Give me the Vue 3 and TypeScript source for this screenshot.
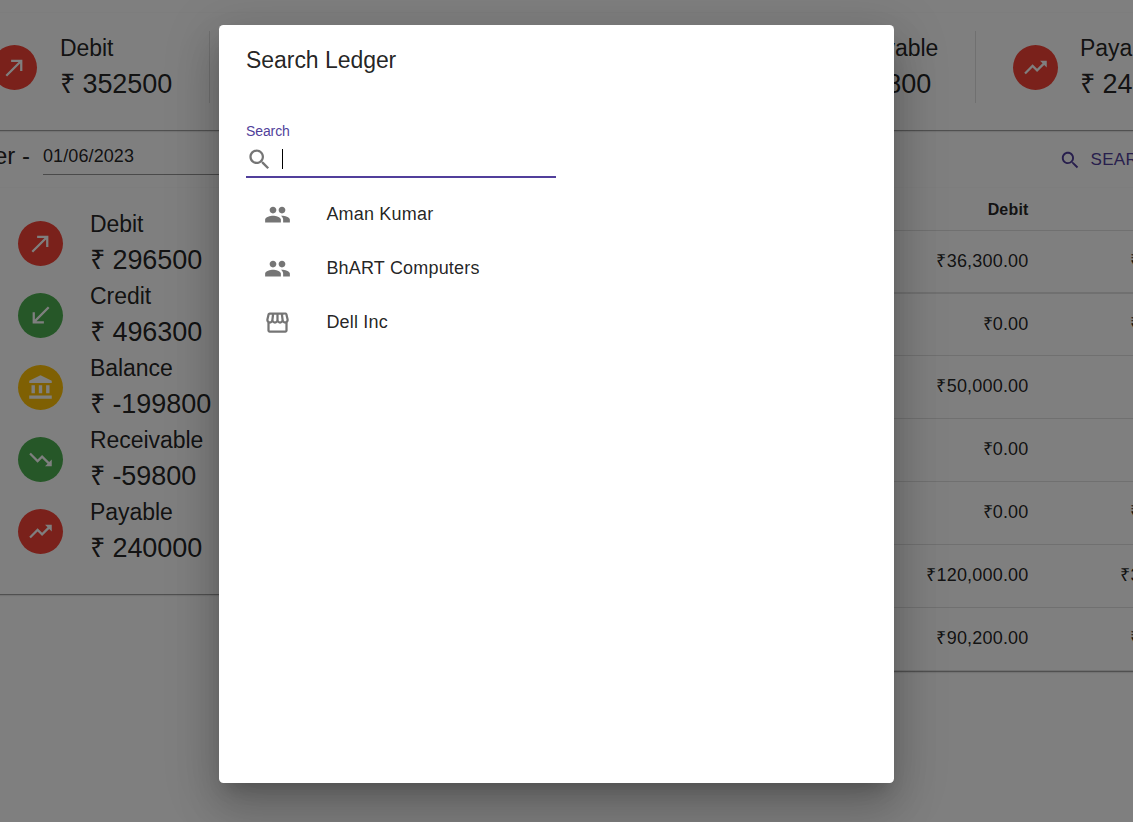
<script setup lang="ts">
interface Stat {
  label: string
  value: string
  tone: 'red' | 'green' | 'amber'
  icon: string
}

const icons = {
  out: 'M9 5v2h6.59L4 18.59 5.41 20 17 8.41V15h2V5z',
  in: 'M20 5.41 18.59 4 7 15.59V9H5v10h10v-2H8.41z',
  bank: 'M4 10h3v7H4zm6.5 0h3v7h-3zM2 19h20v3H2zm15-9h3v7h-3zm-5-9L2 6v2h20V6z',
  down: 'm16 18 2.29-2.29-4.88-4.88-4 4L2 7.41 3.41 6l6 6 4-4 6.3 6.29L22 12v6z',
  up: 'm16 6 2.29 2.29-4.88 4.88-4-4L2 16.59 3.41 18l6-6 4 4 6.3-6.29L22 12V6z',
  search:
    'M15.5 14h-.79l-.28-.27C15.41 12.59 16 11.11 16 9.5 16 5.91 13.09 3 9.5 3S3 5.91 3 9.5 5.91 16 9.5 16c1.61 0 3.09-.59 4.23-1.57l.27.28v.79l5 4.99L20.49 19l-4.99-5zm-6 0C7.01 14 5 11.99 5 9.5S7.01 5 9.5 5 14 7.01 14 9.5 11.99 14 9.5 14z',
  group:
    'M16 11c1.66 0 2.99-1.34 2.99-3S17.66 5 16 5s-3 1.34-3 3 1.34 3 3 3zm-8 0c1.66 0 2.99-1.34 2.99-3S9.66 5 8 5 5 6.34 5 8s1.34 3 3 3zm0 2c-2.33 0-7 1.17-7 3.5V19h14v-2.5c0-2.33-4.67-3.5-7-3.5zm8 0c-.29 0-.62.02-.97.05 1.16.84 1.97 1.97 1.97 3.45V19h6v-2.5c0-2.33-4.67-3.5-7-3.5z',
  store:
    'M21.9 8.89l-1.05-4.37c-.22-.9-1-1.52-1.91-1.52H5.05c-.9 0-1.69.63-1.9 1.52L2.1 8.89c-.24 1.02-.02 2.06.62 2.88.08.11.19.19.28.29V19c0 1.1.9 2 2 2h14c1.1 0 2-.9 2-2v-6.94c.09-.09.2-.18.28-.28.64-.82.87-1.87.62-2.89zm-2.99-3.9l1.05 4.37c.1.42.01.84-.25 1.17-.14.18-.44.47-.94.47-.61 0-1.14-.49-1.21-1.14L16.98 5l1.93-.01zM13 5h1.96l.54 4.52c.05.39-.07.78-.33 1.07-.22.26-.54.41-.95.41-.67 0-1.22-.59-1.22-1.31V5zM8.49 9.52L9.04 5H11v4.69c0 .72-.55 1.31-1.29 1.31-.34 0-.65-.15-.89-.41-.25-.29-.37-.68-.33-1.07zm-4.45-.16L5.05 5h1.97l-.58 4.86c-.08.65-.6 1.14-1.21 1.14-.49 0-.8-.29-.93-.47-.27-.32-.36-.75-.26-1.17zM5 19v-6.03c.08.01.15.03.23.03.87 0 1.66-.36 2.24-.95.6.6 1.4.95 2.31.95.87 0 1.65-.36 2.23-.93.59.57 1.39.93 2.29.93.84 0 1.64-.35 2.24-.95.58.59 1.37.95 2.24.95.08 0 .15-.02.23-.03V19H5z',
}

const overall: Stat[] = [
  { label: 'Debit', value: '352500', tone: 'red', icon: icons.out },
  { label: 'Credit', value: '496300', tone: 'green', icon: icons.in },
  { label: 'Balance', value: '-199800', tone: 'amber', icon: icons.bank },
  { label: 'Receivable', value: '-59800', tone: 'green', icon: icons.down },
  { label: 'Payable', value: '240000', tone: 'red', icon: icons.up },
]
const period: Stat[] = overall.map((s) => (s.label === 'Debit' ? { ...s, value: '296500' } : s))

const rows: [string, string][] = [
  ['₹36,300.00', '₹20,000.00'],
  ['₹0.00', '₹50,000.00'],
  ['₹50,000.00', '₹0.00'],
  ['₹0.00', '₹0.00'],
  ['₹0.00', '₹26,300.00'],
  ['₹120,000.00', '₹310,000.00'],
  ['₹90,200.00', '₹90,000.00'],
]

const results = [
  { name: 'Aman Kumar', icon: icons.group },
  { name: 'BhART Computers', icon: icons.group },
  { name: 'Dell Inc', icon: icons.store },
]
</script>

<template>
  <div class="screen">
    <div class="page">
      <section class="card summary">
        <div v-for="s in overall" :key="s.label" class="stat">
          <span class="avatar" :class="s.tone"><svg viewBox="0 0 24 24"><path :d="s.icon" /></svg></span>
          <div class="figures">
            <div class="label">{{ s.label }}</div>
            <div class="value">₹ {{ s.value }}</div>
          </div>
        </div>
      </section>

      <div class="toolbar">
        <div class="heading">Ledger -</div>
        <div class="date">01/06/2023</div>
        <div class="searchbtn">
          <svg viewBox="0 0 24 24"><path :d="icons.search" /></svg>
          <span>SEARCH</span>
        </div>
      </div>

      <div class="columns">
        <section class="card side">
          <div v-for="s in period" :key="s.label" class="entry">
            <span class="avatar" :class="s.tone"><svg viewBox="0 0 24 24"><path :d="s.icon" /></svg></span>
            <div class="figures">
              <div class="label">{{ s.label }}</div>
              <div class="value">₹ {{ s.value }}</div>
            </div>
          </div>
        </section>
        <section class="card table">
          <div class="row head"><span>Debit</span><span>Credit</span></div>
          <div v-for="(r, i) in rows" :key="i" class="row">
            <span>{{ r[0] }}</span><span>{{ r[1] }}</span>
          </div>
        </section>
      </div>
    </div>

    <div class="backdrop">
      <div class="dialog">
        <h2>Search Ledger</h2>
        <div class="caption">Search</div>
        <div class="field">
          <svg viewBox="0 0 24 24"><path :d="icons.search" /></svg>
          <i class="caret"></i>
        </div>
        <ul>
          <li v-for="r in results" :key="r.name">
            <svg viewBox="0 0 24 24"><path :d="r.icon" /></svg>
            <span>{{ r.name }}</span>
          </li>
        </ul>
      </div>
    </div>
  </div>
</template>

<style>
body {
  margin: 0;
  overflow: hidden;
}
</style>

<style scoped>
.screen {
  position: relative;
  width: 1133px;
  height: 822px;
  overflow: hidden;
  background: #fff;
  color: rgba(0, 0, 0, 0.87);
  font-family: 'Liberation Sans', Arial, sans-serif;
  font-size: 18px;
}
svg {
  display: block;
  width: 27px;
  height: 27px;
  fill: currentColor;
}
.page {
  box-sizing: border-box;
  width: 1353px;
  margin-left: -20px;
  padding-top: 13px;
}
.card {
  box-sizing: border-box;
  background: #fff;
  box-shadow: 0 2px 1px -1px rgba(0, 0, 0, 0.2), 0 1px 1px 0 rgba(0, 0, 0, 0.14), 0 1px 3px 0 rgba(0, 0, 0, 0.12);
}
.summary {
  display: grid;
  grid-template-columns: 210px 255px 256px 255px 300px;
  height: 117px;
  padding: 18px 0 0 20px;
}
.stat {
  display: flex;
  box-sizing: border-box;
  align-items: center;
  height: 72px;
  gap: 22px;
  padding-left: 37px;
  border-right: 1px solid rgba(0, 0, 0, 0.12);
}
.stat:first-child {
  padding-left: 0;
  margin-left: -8px;
  gap: 23px;
}
.avatar {
  display: flex;
  align-items: center;
  justify-content: center;
  flex: none;
  width: 45px;
  height: 45px;
  border-radius: 50%;
  color: #fff;
}
.red {
  background: #f44336;
}
.green {
  background: #4caf50;
}
.amber {
  background: #ffc107;
}
.figures {
  margin-top: -2px;
  white-space: nowrap;
}
.label {
  font-size: 23px;
  line-height: 36px;
  letter-spacing: -0.05px;
}
.value {
  font-size: 27px;
  line-height: 36px;
  letter-spacing: -0.04px;
}
.toolbar {
  display: flex;
  height: 58px;
  padding-left: 20px;
}
.heading {
  width: 30px;
  margin-right: 13px;
  display: flex;
  flex: none;
  justify-content: flex-end;
  white-space: nowrap;
  font-size: 24px;
  line-height: 52px;
}
.date {
  box-sizing: border-box;
  flex: none;
  width: 225px;
  height: 45px;
  padding-top: 13px;
  line-height: 26px;
  letter-spacing: 0.1px;
  border-bottom: 1px solid rgba(0, 0, 0, 0.42);
}
.searchbtn {
  display: flex;
  align-items: center;
  height: 60px;
  margin-left: 791px;
  gap: 9px;
  color: #513f9b;
  font-size: 17px;
  letter-spacing: 0.02em;
}
.searchbtn svg {
  width: 22.5px;
  height: 22.5px;
}
.columns {
  display: flex;
  align-items: flex-start;
}
.side {
  flex: none;
  width: 255px;
  height: 406px;
  padding: 19px 0 0 38px;
}
.entry {
  display: flex;
  align-items: center;
  height: 72px;
  gap: 27px;
}
.table {
  flex: none;
  width: 1080px;
  margin-left: 18px;
}
.row {
  display: grid;
  grid-template-columns: 775.5px 194px;
  box-sizing: border-box;
  height: 63px;
  line-height: 61px;
  text-align: right;
  letter-spacing: 0.01071em;
  border-bottom: 1px solid #e0e0e0;
}
.row:nth-child(2) {
  border-bottom-width: 2px;
}
.row:nth-child(3) {
  height: 62px;
}
.head {
  height: 43px;
  line-height: 43px;
  font-size: 16px;
  font-weight: 700;
}
.backdrop {
  position: absolute;
  inset: 0;
  background: rgba(0, 0, 0, 0.5);
}
.dialog {
  box-sizing: border-box;
  width: 675px;
  height: 758px;
  margin: 25px 0 0 219px;
  padding: 17px 27px;
  background: #fff;
  border-radius: 4.5px;
  box-shadow: 0 12px 17px -8px rgba(0, 0, 0, 0.2), 0 27px 43px 3px rgba(0, 0, 0, 0.14), 0 10px 52px 9px rgba(0, 0, 0, 0.12);
}
h2 {
  margin: 0;
  font-size: 23px;
  font-weight: 400;
  line-height: 36px;
  letter-spacing: -0.05px;
}
.caption {
  margin-top: 43px;
  color: #513f9b;
  font-size: 14px;
  line-height: 21px;
  letter-spacing: -0.1px;
}
.field {
  display: flex;
  align-items: center;
  box-sizing: border-box;
  width: 310px;
  height: 36px;
  padding-top: 1px;
  gap: 9px;
  border-bottom: 2px solid #513f9b;
  color: rgba(0, 0, 0, 0.54);
}
.caret {
  width: 1px;
  height: 20px;
  margin-bottom: 1px;
  background: #000;
}
ul {
  margin: 9px 0 0;
  padding: 0;
  list-style: none;
}
li {
  display: flex;
  align-items: center;
  height: 54px;
  padding-left: 18px;
  letter-spacing: 0.19px;
}
li svg {
  margin-right: 35.4px;
  color: rgba(0, 0, 0, 0.54);
}
</style>
